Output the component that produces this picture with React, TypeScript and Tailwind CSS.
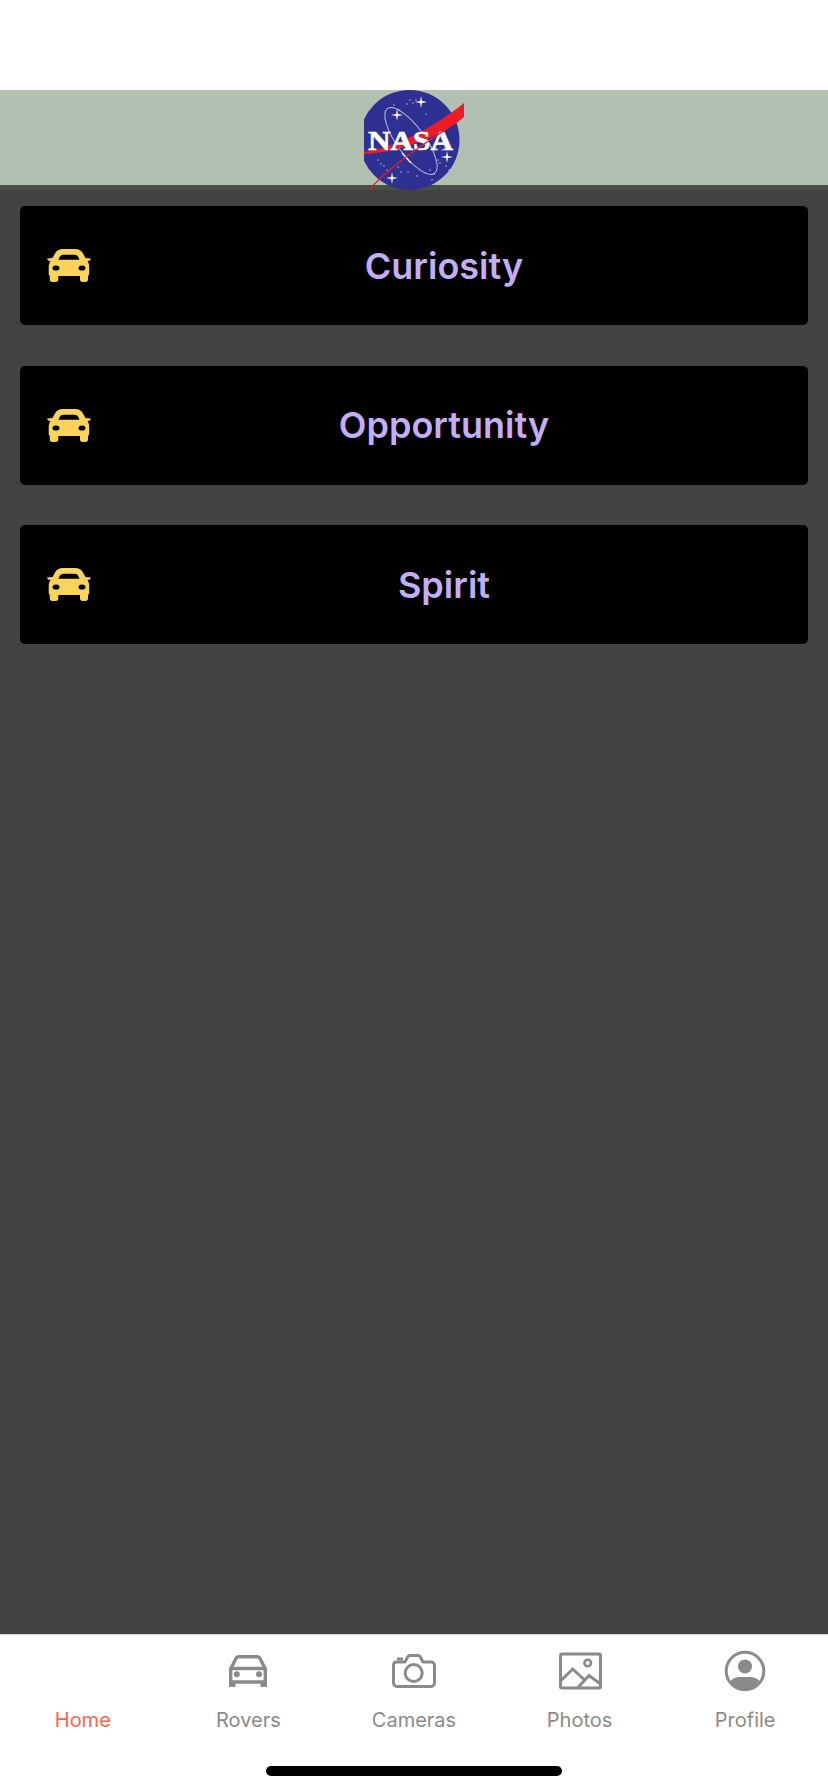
import React from "react";

const Star = ({ x, y, r }: { x: number; y: number; r: number }) => (
  <path
    d={`M${x} ${y - r} L${x + r * 0.15} ${y - r * 0.15} L${x + r} ${y} L${x + r * 0.15} ${y + r * 0.15} L${x} ${y + r} L${x - r * 0.15} ${y + r * 0.15} L${x - r} ${y} L${x - r * 0.15} ${y - r * 0.15}Z`}
    fill="#fff"
  />
);

const dots: [number, number][] = [
  [46, 10], [49, 13], [52, 10], [43, 14], [30, 15], [62, 24], [35, 20], [60, 12],
  [14, 70], [17, 74], [20, 76], [34, 77], [37, 82], [44, 82], [53, 86], [66, 80],
  [70, 84], [74, 70], [76, 73], [82, 76], [85, 80], [78, 60], [68, 90], [23, 80],
];

const NasaLogo = () => (
  <svg viewBox="0 0 100 100" className="block w-[100px] h-[100px]">
    <circle cx="45.5" cy="50" r="50" fill="#2e3192" />
    <ellipse cx="47" cy="51" rx="14" ry="40" transform="rotate(-36 47 51)" fill="none" stroke="#b9bcdf" strokeWidth="1" />
    <g fill="#c9cbe6">
      {dots.map(([x, y]) => <circle key={`${x}-${y}`} cx={x} cy={y} r="0.7" />)}
    </g>
    <Star x={57} y={12} r={6} />
    <Star x={33} y={25} r={6} />
    <Star x={28} y={88} r={6} />
    <Star x={83} y={67} r={6} />
    <path d="M38 63 L47 73" stroke="#e8e8f4" strokeWidth="1.4" />
    <path d="M0 62 C32 57 66 40 100 13 L100 27 C84 42 42 62 0 64Z" fill="#ed1c24" />
    <text x="4" y="60" fill="#fff" stroke="#fff" strokeWidth="0.6" fontFamily="'Liberation Serif', serif" fontWeight="700" fontSize="27" textLength="85" lengthAdjust="spacingAndGlyphs">NASA</text>
    <path d="M5 100 C22 80 50 60 84 38" fill="none" stroke="#ed1c24" strokeWidth="1.3" />
  </svg>
);

const YellowCar = () => (
  <svg width="44" height="33" viewBox="0 0 44 33" className="block shrink-0">
    <path
      fillRule="evenodd"
      fill="#fad35a"
      d="M16 0 H28 C32 0 34.5 1.5 36 4.5 L38.5 9 L44 9.5 L43 11.5 L40.5 12 C41.8 14 42.2 16 42.2 18 V24 C42.2 25.5 41.8 26.3 41 27 V30.5 C41 32 40 33 38.5 33 H35.5 C34 33 33 32 33 30.5 V27 H11.3 V30.5 C11.3 32 10.3 33 8.8 33 H5.3 C3.8 33 2.8 32 2.8 30.5 V27 C2 26.3 1.7 25.5 1.7 24 V18 C1.7 16 2.2 14 3.5 12 L1 11.5 L0 9.5 L5.5 9 L8 4.5 C9.5 1.5 12 0 16 0Z
      M17 5.7 C14.5 5.7 13.5 6.5 12.8 7.8 L11.5 10.7 H32.5 L31.2 7.8 C30.5 6.5 29.5 5.7 27 5.7Z
      M5.5 19 A3.5 2.6 0 1 0 12.5 19 A3.5 2.6 0 1 0 5.5 19Z
      M31.5 19 A3.5 2.6 0 1 0 38.5 19 A3.5 2.6 0 1 0 31.5 19Z"
    />
  </svg>
);

const rovers = ["Curiosity", "Opportunity", "Spirit"];

const RoverCard = ({ name }: { name: string }) => (
  <div className="flex items-center h-[119px] rounded-[5px] bg-black pl-[27px]">
    <YellowCar />
    <div className="flex-1 text-center pr-[11px] text-[36px] font-semibold text-[#c3aef5] [font-family:Inter,sans-serif]">{name}</div>
  </div>
);

const Tab = ({ label, icon, active }: { label: string; icon?: React.ReactNode; active?: boolean }) => (
  <div className="flex-1 flex flex-col items-center">
    <div className="h-[48px] flex items-center justify-center text-[#8a8a8a]">{icon}</div>
    <div className={`mt-[13px] text-[20px] leading-[24px] [font-family:Inter,sans-serif] ${active ? "text-[#ff6347]" : "text-[#8a8a8a]"}`}>{label}</div>
  </div>
);

const RoverIcon = () => (
  <svg width="38" height="32" viewBox="0 0 38 32" fill="none" stroke="currentColor" strokeWidth="3.4">
    <path d="M1.7 29 V14 L7 3.5 C7.5 2.3 8.3 1.7 9.5 1.7 H28.5 C29.7 1.7 30.5 2.3 31 3.5 L36.3 14 V29" />
    <path d="M1.7 13.5 H36.3 M1.7 27 H36.3" />
    <circle cx="7.8" cy="19.3" r="3" fill="currentColor" stroke="none" />
    <circle cx="30" cy="19.3" r="3" fill="currentColor" stroke="none" />
    <rect x="0" y="27" width="6.5" height="5" fill="currentColor" stroke="none" />
    <rect x="31.5" y="27" width="6.5" height="5" fill="currentColor" stroke="none" />
  </svg>
);

const CameraIcon = () => (
  <svg width="44" height="34" viewBox="0 0 44 34" fill="none" stroke="currentColor" strokeWidth="3">
    <path d="M4.5 8 H13 L15.5 3.2 C16 2 17 1.5 18 1.5 H26 C27 1.5 28 2 28.5 3.2 L31 8 H39 C41 8 42.5 9.5 42.5 11.5 V29 C42.5 31 41 32.5 39 32.5 H5 C3 32.5 1.5 31 1.5 29 V11.5 C1.5 9.5 2.5 8 4.5 8Z" strokeLinejoin="round" />
    <circle cx="21.7" cy="19" r="8.5" />
    <rect x="5" y="3.5" width="6" height="3" fill="currentColor" stroke="none" />
  </svg>
);

const PhotoIcon = () => (
  <svg width="44" height="38" viewBox="0 0 44 38" fill="none" stroke="currentColor" strokeWidth="3">
    <rect x="2.5" y="2" width="40" height="34" rx="1.5" />
    <circle cx="29.7" cy="11" r="3.3" strokeWidth="2.6" />
    <path d="M2.5 29 L14.7 17 L27 28.5" />
    <path d="M19.5 36 L31 23.5 L42.5 32" />
  </svg>
);

const ProfileIcon = () => (
  <svg width="42" height="42" viewBox="0 0 42 42">
    <circle cx="21" cy="21" r="18.8" fill="none" stroke="currentColor" strokeWidth="3" />
    <circle cx="21" cy="16.5" r="7" fill="currentColor" />
    <path d="M6 32 C10 26 15 27 21 27 C27 27 32 26 36 32 C32 38 27 40.5 21 40.5 C15 40.5 10 38 6 32Z" fill="currentColor" />
  </svg>
);

export default function App() {
  return (
    <div className="flex flex-col h-[1792px] w-[828px] bg-white overflow-hidden">
      <div className="h-[90px] bg-white" />
      <div className="h-[100px] bg-[#b2c0b2] flex justify-center border-b-[5px] border-[#465046]">
        <div className="w-[100px] h-[100px] z-10 overflow-hidden"><NasaLogo /></div>
      </div>
      <div className="flex-1 bg-[#424242] px-[20px] pt-[16px] flex flex-col gap-[40.5px]">
        {rovers.map((r) => <RoverCard key={r} name={r} />)}
      </div>
      <div className="h-[158px] bg-white border-t-[1px] border-[#d8d8d8] relative">
        <div className="flex pt-[12px]">
          <Tab label="Home" active />
          <Tab label="Rovers" icon={<RoverIcon />} />
          <Tab label="Cameras" icon={<CameraIcon />} />
          <Tab label="Photos" icon={<PhotoIcon />} />
          <Tab label="Profile" icon={<ProfileIcon />} />
        </div>
        <div className="absolute left-[266px] top-[131px] w-[296px] h-[10px] rounded-full bg-black" />
      </div>
    </div>
  );
}
